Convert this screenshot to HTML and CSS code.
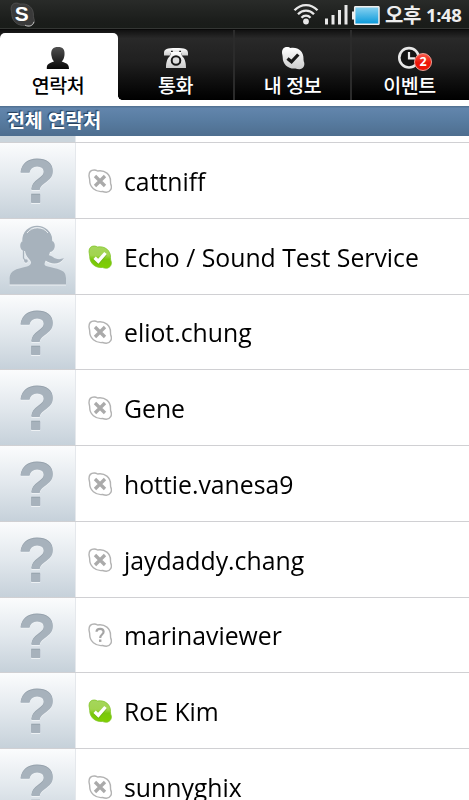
FILE: index.html
```html
<!DOCTYPE html>
<html lang="ko">
<head>
<meta charset="utf-8">
<title>연락처</title>
<link rel="stylesheet" href="styles.css">
</head>
<body>
<svg class="defs" width="0" height="0" aria-hidden="true">
  <defs>
    <linearGradient id="green" x1="0" y1="0" x2="0" y2="1"><stop offset="0" stop-color="#a5d65c"/><stop offset=".42" stop-color="#a2d44f"/><stop offset=".6" stop-color="#79c70c"/><stop offset="1" stop-color="#80d000"/></linearGradient>
    <linearGradient id="silver" x1="0" y1="0" x2="0" y2="1"><stop offset="0" stop-color="#fff"/><stop offset="1" stop-color="#ccc"/></linearGradient>
    <linearGradient id="dark" x1="0" y1="0" x2="0" y2="1"><stop offset="0" stop-color="#505050"/><stop offset="1" stop-color="#080808"/></linearGradient>
    <linearGradient id="blue" x1="0" y1="0" x2="0" y2="1"><stop offset="0" stop-color="#8bd3f1"/><stop offset="1" stop-color="#0698da"/></linearGradient>
    <path id="cloud" d="M1 6.5C1 2.8 3.200 1 6.200 1C7.600 1 8.800 1.500 9.600 2C17 .8 22.700 5.400 22.500 12.600C22.500 13.700 22.500 14.400 22.800 15.400C24.500 19 22.300 23.100 18.300 23.200C16.800 23.200 15.700 22.900 14.500 22.500C7.500 23.300 1.500 18.300 1.700 11.200C1.700 9.200 1 8.500 1 6.500Z"/>
    <symbol id="offline" viewBox="0 0 24 24"><use href="#cloud" fill="#fff" stroke="#b3b3b3" stroke-width="1.4"/><path d="M7 7L17 17M17 7L7 17" stroke="#aaa" stroke-width="3.3"/></symbol>
    <symbol id="online" viewBox="0 0 24 24"><use href="#cloud" fill="url(#green)" stroke="#82c52a" stroke-width=".8"/><path d="M6.600 13.400L10.300 17L17.500 8.700" fill="none" stroke="#579711" stroke-opacity=".4" stroke-width="4"/><path d="M6.600 12.700L10.300 16.200L17.500 8" fill="none" stroke="#fff" stroke-width="3.4"/></symbol>
    <symbol id="unknown" viewBox="0 0 24 24"><use href="#cloud" fill="#fff" stroke="#b3b3b3" stroke-width="1.4"/><path d="M8.500 8.800C8.700 4.900 15.500 4.800 15.600 8.800C15.600 11.600 12.200 11.500 12.200 15" fill="none" stroke="#a5a5a5" stroke-width="2.200"/><path d="M11 16.500h2.400v2.400h-2.400z" fill="#a5a5a5"/></symbol>
  </defs>
</svg>
<div class="screen">
  <header class="status">
    <svg class="logo" viewBox="0 0 24 24"><use href="#cloud" fill="#3a3a3a" stroke="#555" stroke-width=".7"/><path d="M14.500 22.300C18 24 22 23 23 19" fill="none" stroke="#ccc" stroke-width=".9"/><text x="11.300" y="18.300" text-anchor="middle">S</text></svg>
    <svg class="wifi" viewBox="0 0 26 22" fill="none" stroke="#e8e8e8" stroke-width="2.300"><path d="M1.500 7.300C8 .3 18 .3 24.500 7.300M5 11.200C9.500 6.500 16.500 6.500 21 11.200M8.500 14.800C11 12 15 12 17.500 14.800"/><circle cx="13" cy="18.500" r="2.900" fill="#e8e8e8" stroke="none"/></svg>
    <svg class="signal" viewBox="0 0 23 20" fill="#e8e8e8"><path d="M0 13.500h3v6H0zM6.500 10h3v9.500h-3zM13 5h3v14.500h-3zM19.500 0h3v19.500h-3z"/></svg>
    <svg class="battery" viewBox="0 0 28 19"><path d="M0 5.500h3v8H0z" fill="#eee"/><rect x="2.700" y=".7" width="24.300" height="17.600" rx=".8" fill="url(#blue)" stroke="#eee" stroke-width="1.500"/></svg>
    <div class="clock"><span class="ampm">오후</span><span class="time">1:48</span></div>
  </header>
  <nav class="tabs">
    <div class="tab active">
      <svg viewBox="0 0 28 24"><path d="M2.800 23C2.800 18.500 3.500 17.800 10 15.500C7.800 13.500 7.800 10.500 7.300 9C6.800 3.500 9 1 14 1C19 1 21 3.500 20.500 9C20.100 12 19.500 14 17.700 15.500C23.500 17.500 25 18.500 25 23Z" fill="url(#dark)"/></svg>
      <span>연락처</span>
    </div>
    <div class="tab">
      <svg viewBox="0 0 28 24"><path d="M2 7C2 3 5 2 14 2S26 3 26 7V9.500H20V7.500H8V9.500H2Z" fill="url(#silver)"/><path d="M9 6h10l1 4C23.500 13 24 18 24 22H4C4 18 4.500 13 8 10Z" fill="url(#silver)"/><circle cx="14" cy="14.500" r="4.300" fill="#ddd" stroke="#171717" stroke-width="2"/><path d="M9 5.300h1.800M17.200 5.300H19" stroke="#222" stroke-width="1.300"/></svg>
      <span>통화</span>
    </div>
    <div class="tab">
      <svg viewBox="0 0 28 24"><use href="#cloud" x="2" fill="url(#silver)"/><path d="M8.500 12.500L12.500 15.800L19.300 8.500" fill="none" stroke="#191919" stroke-width="3.300"/></svg>
      <span>내 정보</span>
    </div>
    <div class="tab">
      <svg viewBox="0 0 28 24"><circle cx="13" cy="11.800" r="9.700" fill="#151515" stroke="#e8e8e8" stroke-width="2.600"/><path d="M13 6v6.300h6" fill="none" stroke="#eee" stroke-width="2.200"/></svg>
      <span>이벤트</span>
      <b class="badge">2</b>
    </div>
  </nav>
  <h1 class="section">전체 연락처</h1>
  <ul class="list">
    <li class="row sliver"><div class="avatar"></div></li>
    <li class="row"><div class="avatar">?</div><svg class="state"><use href="#offline"/></svg><span class="name">cattniff</span></li>
    <li class="row"><div class="avatar"><svg class="person" viewBox="0 0 60 62"><path d="M1.500 60.500V54C2.500 46 7 45.500 19 42.500C24 41 24 38 21 35C18 32 17.500 29 17 27C11 27 11 18 15 17C15 7 20 4 29 4S44 7 44 17C48 18 48 27 42 28C41 32 39 34 37.500 37C35 42 38 42 42 43C53 46 57.500 46 58 54V60.500Z" fill="#a7b2bc"/><path d="M15 17C15-2.500 43-2.500 43.500 17" fill="none" stroke="#a7b2bc" stroke-width="1.500"/><path d="M19 9C24 2 35 2 40 9" fill="none" stroke="#e9edf0" stroke-width="1"/><path d="M39 31C44 30 47 38 56 34C52 41 43 41 37 36Z" fill="#a7b2bc"/><path d="M15.500 27V34L18 38" fill="none" stroke="#a7b2bc" stroke-width="1.300"/><circle cx="18" cy="37" r="1.800" fill="#a7b2bc"/></svg></div><svg class="state"><use href="#online"/></svg><span class="name">Echo / Sound Test Service</span></li>
    <li class="row"><div class="avatar">?</div><svg class="state"><use href="#offline"/></svg><span class="name">eliot.chung</span></li>
    <li class="row"><div class="avatar">?</div><svg class="state"><use href="#offline"/></svg><span class="name">Gene</span></li>
    <li class="row"><div class="avatar">?</div><svg class="state"><use href="#offline"/></svg><span class="name">hottie.vanesa9</span></li>
    <li class="row"><div class="avatar">?</div><svg class="state"><use href="#offline"/></svg><span class="name">jaydaddy.chang</span></li>
    <li class="row"><div class="avatar">?</div><svg class="state"><use href="#unknown"/></svg><span class="name">marinaviewer</span></li>
    <li class="row"><div class="avatar">?</div><svg class="state"><use href="#online"/></svg><span class="name">RoE Kim</span></li>
    <li class="row"><div class="avatar">?</div><svg class="state"><use href="#offline"/></svg><span class="name">sunnyghix</span></li>
  </ul>
</div>
</body>
</html>
```
FILE: styles.css
```css
* { box-sizing: border-box; }
body { margin: 0; background: #fff; font-family: "Open Sans", "Noto Sans CJK KR", sans-serif; }
svg { display: block; flex: none; }
.defs { position: absolute; }
.screen { width: 469px; height: 800px; overflow: hidden; display: flex; flex-direction: column; }
.status { flex: none; height: 30px; display: flex; align-items: flex-start; background: linear-gradient(#292b29, #1b1d1b 70%, #191c19 93%, #343634 93%, #343634 97%, #090909 97%); color: #eee; }
.logo { width: 25px; height: 25px; margin: 2px 0 0 10px; }
.logo text { font: bold 20px "Liberation Sans", sans-serif; fill: #fff; }
.wifi { width: 26px; height: 22px; margin: 3px 0 0 258px; }
.signal { width: 23px; height: 20px; margin: 5px 0 0 6px; }
.battery { width: 28px; height: 19px; margin: 5.500px 0 0 4px; }
.clock { display: flex; margin-left: 5px; font-weight: 700; font-size: 18.500px; line-height: 30px; letter-spacing: -0.400px; white-space: nowrap; }
.ampm { width: 41px; font-family: "Noto Sans CJK KR", sans-serif; font-size: 20px; }
.tabs { flex: none; height: 70px; display: flex; background: linear-gradient(#111, #292929 12%, #202020 45%, #050505 90%, #000); }
.tab { position: relative; flex: none; width: 117px; display: flex; flex-direction: column; align-items: center; padding-top: 15.500px; color: #fff; border-left: 2px solid #2b2b2b; font: 500 19.500px/24px "Noto Sans CJK KR", sans-serif; }
.tab:nth-child(2) { width: 115px; border-left: 0; background: radial-gradient(circle at 4px 66px, transparent 4px, #fff 4.500px) 0 100% / 4px 4px no-repeat; background: radial-gradient(circle at 100% 0, transparent 3.500px, #fff 4px) 0 100% / 4px 4px no-repeat; }
.tab svg { width: 28px; height: 24px; }
.tab span { margin-top: 3px; white-space: nowrap; letter-spacing: -0.400px; }
.tab.active { width: 118px; margin: 3px 0 0; padding: 13px 2px 0 0; border: 0; background: #fff; color: #000; border-radius: 5px 5px 0 0; }
.badge { position: absolute; left: 62px; top: 23px; width: 18px; height: 18px; border-radius: 50%; border: 1px solid #f3a096; background: linear-gradient(#fb5a4b, #ed1608 55%); color: #fff; text-align: center; font: 700 12.500px/16px "Open Sans", sans-serif; }
.section { flex: none; height: 36px; margin: 0; padding-left: 7px; border-top: 6px solid #fff; background: linear-gradient(#4e6d8d, #6285ac 8%, #597da2 45%, #4e6e8f); background-clip: padding-box; color: #fff; font: 700 19.500px/28px "Noto Sans CJK KR", sans-serif; letter-spacing: -0.200px; text-shadow: -1px -1px 1px #263e58; }
.list { margin: 0; padding: 0; list-style: none; }
.row { height: 75.750px; display: flex; align-items: center; border-bottom: 1px solid #d0d0d3; }
.row.sliver { height: 7px; }
.sliver .avatar { background: #cbd5dc; }
.avatar { flex: none; width: 76px; height: 100%; padding-right: 1px; border-right: 1px solid #e5e8ec; background: linear-gradient(#fbfcfd, #e2e8ed 50%, #c6d1da); color: #a7b2bc; font: bold 63px/77px "Liberation Sans", sans-serif; text-align: center; text-shadow: 0 -1px 0 #96a2ac, 0 1px 0 #edf1f4; }
.person { width: 60px; height: 62px; margin: 5px 0 0 8px; filter: drop-shadow(0 1px 0 #edf1f4); }
.state { width: 24px; height: 24px; margin: 1px 0 0 12px; }
.name { margin: 1px 0 0 12px; font-size: 26px; line-height: 34px; color: #000; white-space: nowrap; transform: scaleX(.953); transform-origin: 0 50%; }
```
